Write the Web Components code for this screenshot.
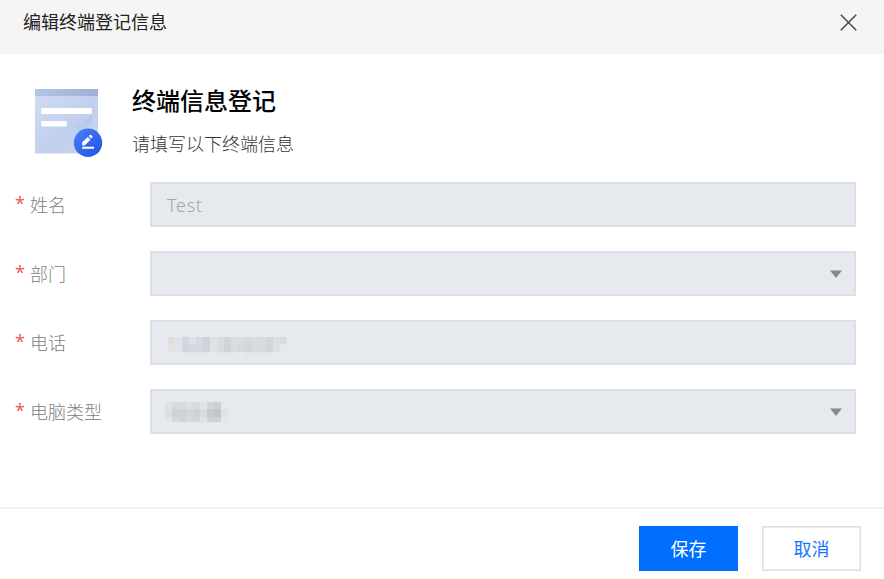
<!DOCTYPE html>
<html lang="zh-CN">
<head>
<meta charset="utf-8">
<title>编辑终端登记信息</title>
<style>
  body {
    margin: 0;
    background: #fff;
    font-family: "Noto Sans CJK SC", sans-serif;
    font-size: 18px;
  }
</style>
</head>
<body>
<edit-dialog heading="编辑终端登记信息">
  <form-intro heading="终端信息登记">请填写以下终端信息</form-intro>
  <form-field label="姓名">Test</form-field>
  <form-field label="部门" select></form-field>
  <form-field label="电话"><masked-value kind="phone"></masked-value></form-field>
  <form-field label="电脑类型" select><masked-value kind="type"></masked-value></form-field>
  <dialog-button slot="footer" primary>保存</dialog-button>
  <dialog-button slot="footer">取消</dialog-button>
</edit-dialog>

<script>
class EditDialog extends HTMLElement {
  constructor() {
    super();
    this.attachShadow({ mode: "open" });
  }

  connectedCallback() {
    this.shadowRoot.innerHTML = `
      <style>
      :host {
        display: flex;
        flex-direction: column;
        height: 579px;
        overflow: hidden;
      }
      * {
        box-sizing: border-box;
      }
      header {
        display: flex;
        justify-content: space-between;
        height: 54px;
        padding: 0 27px 0 23px;
        background: #f5f5f5;
        color: #222;
      }
      h1 {
        margin: 7px 0 0;
        font-size: 18px;
        line-height: 28px;
        font-weight: 400;
      }
      header svg {
        margin-top: 14px;
      }
      main {
        flex: 1;
      }
      footer {
        display: flex;
        justify-content: flex-end;
        gap: 24px;
        height: 72px;
        padding: 17px 23px 0 0;
        border-top: 2px solid #eff0f5;
      }
      </style>
      <header>
        <h1>${this.getAttribute("heading")}</h1>
        <svg width="17" height="17" viewBox="0 0 17 17" fill="none" stroke="#4c4c4c" stroke-width="1.6">
          <path d="M.8.8 16.2 16.2M16.2.8.8 16.2"/>
        </svg>
      </header>
      <main><slot></slot></main>
      <footer><slot name="footer"></slot></footer>
    `;
  }
}

class FormIntro extends HTMLElement {
  constructor() {
    super();
    this.attachShadow({ mode: "open" });
  }

  connectedCallback() {
    this.shadowRoot.innerHTML = `
      <style>
      :host {
        display: flex;
        gap: 28px;
        height: 128px;
        padding: 34px 0 0 34px;
        box-sizing: border-box;
      }
      h2 {
        margin: -7px 0 0;
        font-size: 24px;
        line-height: 38px;
        font-weight: 500;
        color: #000;
      }
      p {
        margin: 10px 0 0;
        line-height: 28px;
        font-weight: 300;
        color: #333;
      }
      </style>
      <svg width="70" height="71" viewBox="0 0 70 71">
        <defs>
          <linearGradient id="page" x1="0" y1="0" x2="1" y2="1">
            <stop offset="0" stop-color="#d0dcf2"/>
            <stop offset=".6" stop-color="#c0cfed"/>
            <stop offset="1" stop-color="#cbd7f2"/>
          </linearGradient>
          <linearGradient id="bar">
            <stop offset="0" stop-color="#b3c4e2"/>
            <stop offset="1" stop-color="#9db2d6"/>
          </linearGradient>
          <linearGradient id="badge" x1="0" y1="0" x2="1" y2="1">
            <stop offset="0" stop-color="#4a80fb"/>
            <stop offset="1" stop-color="#2051df"/>
          </linearGradient>
          <linearGradient id="shade" x1="0" y1="1" x2="1" y2="0">
            <stop offset=".3" stop-color="#a9bce2" stop-opacity="0"/>
            <stop offset="1" stop-color="#a9bce2" stop-opacity=".6"/>
          </linearGradient>
        </defs>
        <path fill="url(#page)" d="M1 1h63v64.500H1z"/>
        <path fill="url(#shade)" d="M58 27v7L38 52 30 46z"/>
        <path fill="url(#bar)" d="M1 1h63v7H1z"/>
        <path fill="#fff" d="M7.300 20h50.500v6H7.300zM7.300 33h25.400v5.500H7.300z"/>
        <circle cx="54" cy="54.700" r="14.200" fill="url(#badge)"/>
        <path fill="#fff" d="M48.200 58.800H60v2h-11.800zM48.200 57.600v-3.300l5.600-5.300 2.700 2.700-6 5.900zM54.700 48.100l1.200-1.100q.6-.5 1.200.1l1.100 1.100q.6.6 0 1.200l-1 1.100z"/>
      </svg>
      <div>
        <h2>${this.getAttribute("heading")}</h2>
        <p><slot></slot></p>
      </div>
    `;
  }
}

class FormField extends HTMLElement {
  constructor() {
    super();
    this.attachShadow({ mode: "open" });
  }

  connectedCallback() {
    const arrow = this.hasAttribute("select")
      ? `<svg width="12" height="8" viewBox="0 0 12 8"><path fill="#868889" d="M0 .5h12L6 8z"/></svg>`
      : "";

    this.shadowRoot.innerHTML = `
      <style>
      :host {
        display: flex;
        height: 45px;
        margin-bottom: 24px;
        padding: 0 28px 0 15px;
      }
      * {
        box-sizing: border-box;
      }
      .label {
        display: flex;
        width: 135px;
        line-height: 44px;
        font-weight: 300;
        color: #808080;
      }
      .star {
        width: 15px;
        font-family: "Noto Sans", sans-serif;
        font-weight: 400;
        line-height: 43px;
        color: #ee5b5b;
      }
      .control {
        flex: 1;
        display: flex;
        align-items: center;
        justify-content: space-between;
        padding: 0 13px 0 16px;
        border: 1px solid #d9dee7;
        box-shadow: inset 0 0 0 1px #dce1e9;
        background: #e6e9ee;
        color: #a5a6a9;
        font-family: "Noto Sans", "Noto Sans CJK SC", sans-serif;
        font-weight: 300;
        letter-spacing: .7px;
      }
      </style>
      <div class="label"><span class="star">*</span><span>${this.getAttribute("label")}</span></div>
      <div class="control"><span><slot></slot></span>${arrow}</div>
    `;
  }
}

// Censored values, one row of blocks per array
const masks = {
  phone: {
    margin: "9px 0 0 1px",
    rows: [
      [7, "dfdedf dde4ec d2d6df dfe1e5 d7d9e1 cfd2dc dfe2e6 dadde1 d2d4da d9dce1 d8dce0 d7d6d8 d8dde0 d8dcdf d3d5da dddfe2 d5dbe0"],
      [8, "e3e2df dfe4eb d2d5dd d8d8dc d7d8de d0d3dc dfe2e6 d9dce0 d0d2d8 d8dbe0 d5d9de d1d5dc d7dade d4dadd d4d5da dee0e4 e3e7eb"],
      [5, "e6e9ee e6e9ee e3e6eb e3e6eb e4e7eb e3e6ea e6e9ee e4e6ea e3e6ea e4e7ec e6e9ee e3e6ea e3e6eb e3e6eb e4e7eb e6e9ee e6e9ee"]
    ]
  },
  type: {
    margin: "1px 0 0 -2px",
    rows: [
      [7, "e0e1e5 d8dbdd d7dae1 dcdee3 d7dade e0e3e8 d1d4d8 cdd0d4 e5e8ed"],
      [8, "dfdfe2 cfd1d2 d0d3da d4d6da cfd1d5 d8dbe1 c6c9cd c2c5ca e0e2e6"],
      [5, "e2e4e8 d4d8d8 ccd3df d6d9de d3d5d9 dfe2e7 cfd2d6 cbd0da e3e7ee"]
    ]
  }
};

class MaskedValue extends HTMLElement {
  constructor() {
    super();
    this.attachShadow({ mode: "open" });
  }

  connectedCallback() {
    const mask = masks[this.getAttribute("kind")];
    const rows = mask.rows.map(([height, colors]) =>
      `<div class="row" style="height: ${height}px">${colors
        .split(" ")
        .map((color) => `<i style="background: #${color}"></i>`)
        .join("")}</div>`
    );

    this.shadowRoot.innerHTML = `
      <style>
      :host {
        display: block;
        margin: ${mask.margin};
      }
      .row {
        display: flex;
      }
      i {
        width: 7px;
      }
      </style>
      ${rows.join("")}
    `;
  }
}

class DialogButton extends HTMLElement {
  constructor() {
    super();
    this.attachShadow({ mode: "open" });
  }

  connectedCallback() {
    this.shadowRoot.innerHTML = `
      <style>
      :host {
        display: block;
        width: 99px;
        height: 45px;
      }
      button {
        width: 100%;
        height: 100%;
        padding: 0 0 1px;
        border: 1px solid #dadfea;
        box-shadow: inset 0 0 0 1px #e9ecf2;
        background: #fff;
        color: #1677ff;
        font: inherit;
      }
      :host([primary]) button {
        border-color: #006eff;
        box-shadow: none;
        background: #006eff;
        color: #fff;
      }
      </style>
      <button type="button"><slot></slot></button>
    `;
  }
}

customElements.define("edit-dialog", EditDialog);
customElements.define("form-intro", FormIntro);
customElements.define("form-field", FormField);
customElements.define("masked-value", MaskedValue);
customElements.define("dialog-button", DialogButton);
</script>
</body>
</html>
